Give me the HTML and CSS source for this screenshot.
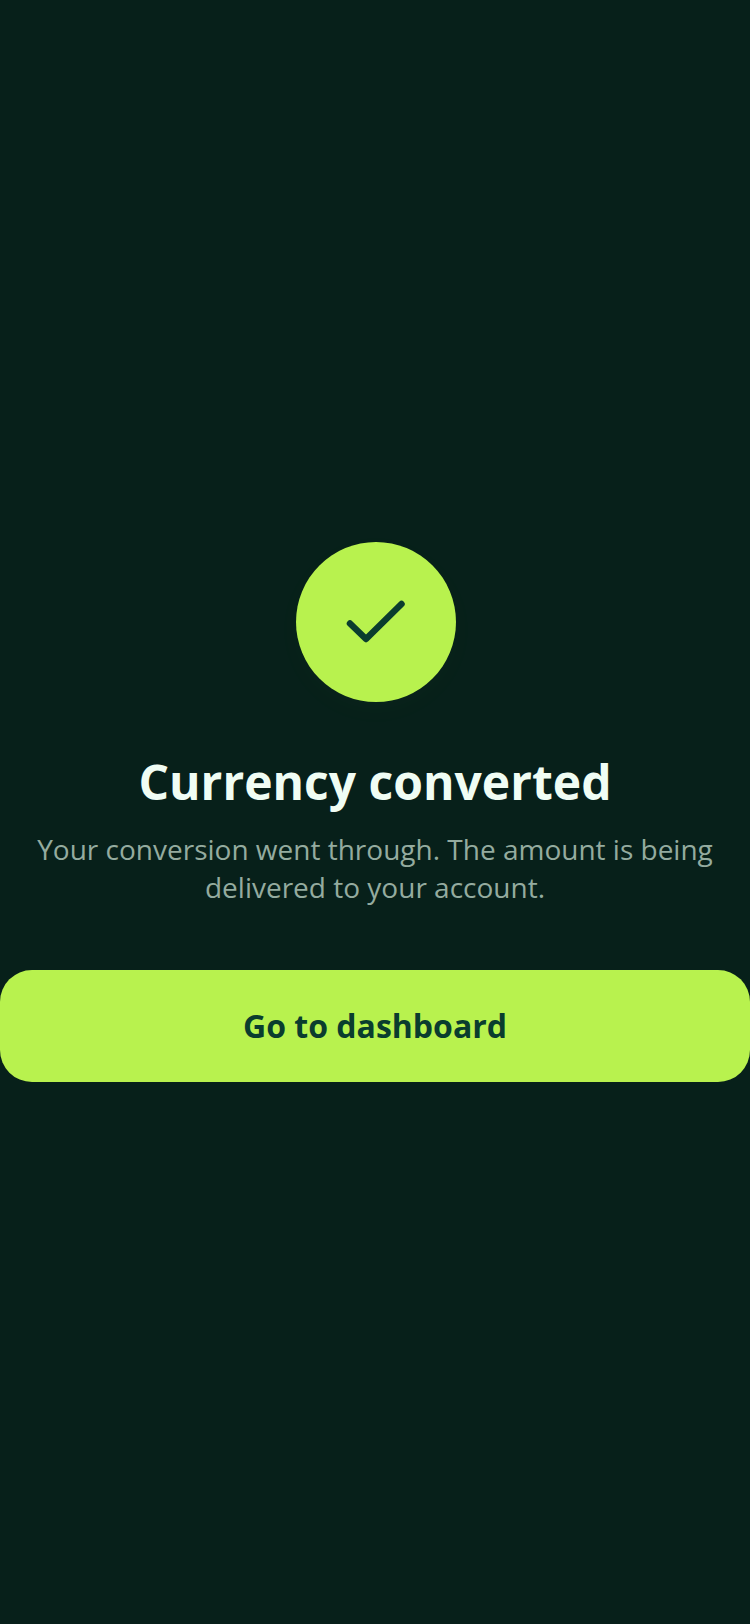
FILE: index.html
```html
<!DOCTYPE html>
<html lang="en">
<head>
  <meta charset="UTF-8">
  <meta name="viewport" content="width=device-width, initial-scale=1.0">
  <title>Currency converted</title>
  <link rel="stylesheet" href="styles.css">
</head>
<body>
  <div class="container">
    <!-- Success Icon -->
    <div class="success-icon">
      <svg width="80" height="80" viewBox="0 0 80 80" fill="none">
        <path d="M14 41.500L30 57L65.500 22" stroke="#0a3d2e" stroke-width="6.500" stroke-linecap="round" stroke-linejoin="round"/>
      </svg>
    </div>

    <h1>Currency converted</h1>
    <p class="message">Your conversion went through. The amount is being delivered to your account.</p>

    <button class="dashboard-button">Go to dashboard</button>
  </div>
</body>
</html>
```

FILE: styles.css
```css
/* General Styles */
body {
  font-family: "Open Sans", sans-serif;
  margin: 0;
  padding: 0;
  background: #07201a;
}

.container {
  min-height: 1624px;
  display: flex;
  flex-direction: column;
  align-items: center;
  justify-content: center;
}

/* Success Icon */
.success-icon {
  width: 160px;
  height: 160px;
  margin-left: 2px;
  border-radius: 50%;
  background: #b8f24e;
  display: flex;
  align-items: center;
  justify-content: center;
  box-shadow: 0 8px 32px rgba(185, 245, 79, 0.02);
}

h1 {
  margin: 48px 0 0;
  font-size: 48px;
  line-height: 64px;
  font-weight: 700;
  color: #f0fdf4;
  text-align: center;
}

.message {
  margin: 16px 0 0;
  padding: 0 32px;
  font-size: 28px;
  line-height: 38px;
  color: #94ab9f;
  text-align: center;
}

/* Dashboard Button */
.dashboard-button {
  width: 100%;
  height: 112px;
  margin-top: 64px;
  padding: 0 0 2px;
  border: none;
  border-radius: 32px;
  background: #b8f24e;
  color: #0a3d2e;
  font-family: inherit;
  font-size: 32px;
  font-weight: 700;
}
```
